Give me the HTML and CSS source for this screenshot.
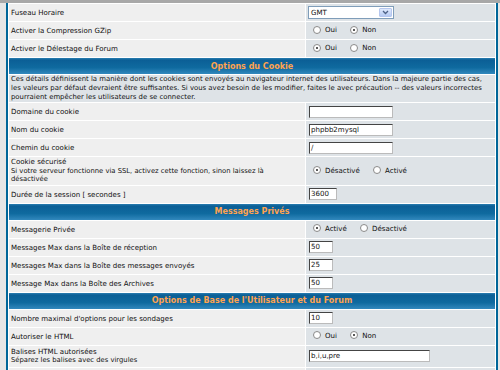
FILE: index.html
```html
<!DOCTYPE html>
<html lang="fr">
<head>
  <meta charset="UTF-8" />
  <title>Configuration générale</title>
  <link rel="stylesheet" href="styles.css">
</head>
<body>
  <div class="topbar"></div>
  <div class="page">
    <table class="forumline">
      <tr>
        <td class="row1">Fuseau Horaire</td>
        <td class="row2">
          <div class="select"><span class="select-value">GMT</span><span class="select-btn"><svg width="7" height="5" viewBox="0 0 7 5"><path d="M1 1 L3.5 3.5 L6 1" fill="none" stroke="#4d6185" stroke-width="1.3"/></svg></span></div>
        </td>
      </tr>
      <tr>
        <td class="row1">Activer la Compression GZip</td>
        <td class="row2">
          <label class="radio"><span class="dot"></span>Oui</label>
          <label class="radio"><span class="dot on"></span>Non</label>
        </td>
      </tr>
      <tr>
        <td class="row1">Activer le Délestage du Forum</td>
        <td class="row2">
          <label class="radio"><span class="dot on"></span>Oui</label>
          <label class="radio"><span class="dot"></span>Non</label>
        </td>
      </tr>
      <tr>
        <th class="thHead" colspan="2">Options du Cookie</th>
      </tr>
      <tr>
        <td class="row-explain" colspan="2">Ces détails définissent la manière dont les cookies sont envoyés au navigateur internet des utilisateurs. Dans la majeure partie des cas, les valeurs par défaut devraient être suffisantes. Si vous avez besoin de les modifier, faites le avec précaution -- des valeurs incorrectes pourraient empêcher les utilisateurs de se connecter.</td>
      </tr>
      <tr>
        <td class="row1">Domaine du cookie</td>
        <td class="row2"><span class="post">&nbsp;</span></td>
      </tr>
      <tr>
        <td class="row1">Nom du cookie</td>
        <td class="row2"><span class="post">phpbb2mysql</span></td>
      </tr>
      <tr>
        <td class="row1">Chemin du cookie</td>
        <td class="row2"><span class="post">/</span></td>
      </tr>
      <tr>
        <td class="row1 tall">Cookie sécurisé<br><span class="gensmall">Si votre serveur fonctionne via SSL, activez cette fonction, sinon laissez là<br>désactivée</span></td>
        <td class="row2">
          <label class="radio"><span class="dot on"></span>Désactivé</label>
          <label class="radio"><span class="dot"></span>Activé</label>
        </td>
      </tr>
      <tr>
        <td class="row1">Durée de la session [ secondes ]</td>
        <td class="row2"><span class="post w4">3600</span></td>
      </tr>
      <tr>
        <th class="thHead" colspan="2">Messages Privés</th>
      </tr>
      <tr>
        <td class="row1">Messagerie Privée</td>
        <td class="row2">
          <label class="radio"><span class="dot on"></span>Activé</label>
          <label class="radio"><span class="dot"></span>Désactivé</label>
        </td>
      </tr>
      <tr>
        <td class="row1">Messages Max dans la Boîte de réception</td>
        <td class="row2"><span class="post w3">50</span></td>
      </tr>
      <tr>
        <td class="row1">Messages Max dans la Boîte des messages envoyés</td>
        <td class="row2"><span class="post w3">25</span></td>
      </tr>
      <tr>
        <td class="row1">Message Max dans la Boîte des Archives</td>
        <td class="row2"><span class="post w3">50</span></td>
      </tr>
      <tr>
        <th class="thHead" colspan="2">Options de Base de l'Utilisateur et du Forum</th>
      </tr>
      <tr>
        <td class="row1">Nombre maximal d'options pour les sondages</td>
        <td class="row2"><span class="post w3">10</span></td>
      </tr>
      <tr>
        <td class="row1">Autoriser le HTML</td>
        <td class="row2">
          <label class="radio"><span class="dot"></span>Oui</label>
          <label class="radio"><span class="dot on"></span>Non</label>
        </td>
      </tr>
      <tr>
        <td class="row1 tall">Balises HTML autorisées<br><span class="gensmall">Séparez les balises avec des virgules</span></td>
        <td class="row2"><span class="post wide">b,i,u,pre</span></td>
      </tr>
      <tr>
        <td class="row1">&nbsp;</td>
        <td class="row2">&nbsp;</td>
      </tr>
    </table>
  </div>
</body>
</html>
```

FILE: styles.css
```css
body {
  margin: 0;
  background-color: #e6e6e6;
  font-family: "DejaVu Sans", Verdana, sans-serif;
  font-size: 7.05px;
  color: #111;
}

.topbar {
  height: 3px;
  background-color: #a8a8a8;
}

.page {
  padding: 0 2px 0 6px;
}

.forumline {
  width: 100%;
  background-color: #fff;
  border: 2px solid #006699;
  border-top: none;
  border-spacing: 1px;
  border-collapse: separate;
}

td {
  padding: 0 2px;
  height: 17px;
  vertical-align: middle;
}

.row1 {
  background-color: #efefef;
  width: 292px;
}

.row2 {
  background-color: #dee3e7;
  padding-left: 2px;
}

.row1.tall {
  height: 19px;
  line-height: 8.5px;
  padding: 1px 2px;
}

.gensmall {
  font-size: 6.8px;
}

.row-explain {
  background-color: #dee3e7;
  font-size: 6.9px;
  line-height: 9px;
  height: 27px;
}

.thHead {
  height: 16px;
  padding: 0;
  color: #ffa34f;
  font-weight: bold;
  font-size: 8px;
  background: linear-gradient(#2c7fb2 0, #0b5f96 2px, #0f6a9f 60%, #3288bd 100%);
}

.select {
  display: flex;
  width: 86px;
  height: 13px;
  border: 1px solid #7f9db9;
  background-color: #fff;
  box-sizing: border-box;
}

.select-value {
  flex: 1;
  padding-left: 2px;
  line-height: 11px;
}

.select-btn {
  width: 11px;
  margin: 1px;
  display: flex;
  align-items: center;
  justify-content: center;
  background: linear-gradient(#dfe9fc, #b7cbf3);
  border: 1px solid #b6c7ee;
  border-radius: 1px;
}

.radio {
  display: inline-flex;
  align-items: center;
  margin-left: 5px;
  margin-right: 6px;
}

.dot {
  width: 6px;
  height: 6px;
  border: 1px solid #8a8a8a;
  border-radius: 50%;
  background-color: #fff;
  margin-right: 4px;
  position: relative;
}

.dot.on::after {
  content: "";
  position: absolute;
  left: 2px;
  top: 2px;
  width: 2px;
  height: 2px;
  border-radius: 50%;
  background-color: #222;
}

.post {
  display: inline-block;
  box-sizing: border-box;
  width: 84px;
  height: 12px;
  line-height: 10px;
  padding: 0 1px;
  margin-left: 1px;
  background-color: #fff;
  border: 1px solid #444;
  border-right-color: #bbb;
  border-bottom-color: #bbb;
  vertical-align: middle;
}

.post.w4 {
  width: 28px;
}

.post.w3 {
  width: 24px;
}

.post.wide {
  width: 121px;
}
```
